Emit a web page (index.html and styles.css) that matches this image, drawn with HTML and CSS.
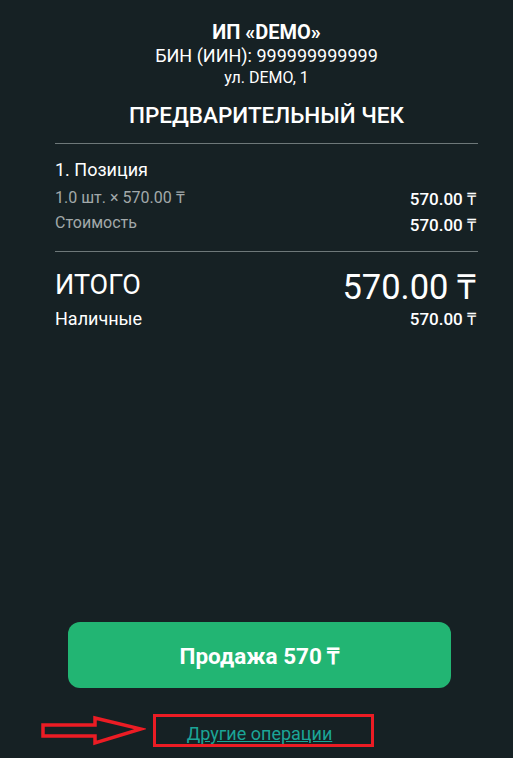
FILE: index.html
```html
<!DOCTYPE html>
<html lang="ru">

<head>
  <meta charset="UTF-8">
  <meta name="viewport" content="width=device-width, initial-scale=1.0">
  <title>Предварительный чек</title>
  <link rel="stylesheet" href="styles.css">
</head>

<body>
  <div class="page">
    <div class="receipt">
      <div class="company">ИП «DEMO»</div>
      <div class="bin">БИН (ИИН): 999999999999</div>
      <div class="address">ул. DEMO, 1</div>
      <h1 class="title">ПРЕДВАРИТЕЛЬНЫЙ ЧЕК</h1>

      <hr class="divider first">

      <div class="item">
        <div class="item-name">1. Позиция</div>
        <div class="row">
          <span class="muted">1.0 шт. × 570.00 ₸</span>
          <span class="amount">570.00 ₸</span>
        </div>
        <div class="row">
          <span class="muted">Стоимость</span>
          <span class="amount">570.00 ₸</span>
        </div>
      </div>

      <hr class="divider">

      <div class="total">
        <span>ИТОГО</span>
        <span class="total-sum">570.00 ₸</span>
      </div>
      <div class="row payment">
        <span>Наличные</span>
        <span class="amount">570.00 ₸</span>
      </div>
    </div>

    <div class="actions">
      <button class="btn-sale">Продажа 570 ₸</button>
      <div class="other">
        <svg class="arrow" width="106" height="32" viewBox="0 0 106 32">
          <polygon points="3,10 55,10 55,3 101,14 55,28 55,21 3,21" fill="none" stroke="#ec1c24" stroke-width="3.5" stroke-linejoin="miter"/>
        </svg>
        <div class="highlight">
          <a href="#" class="other-link">Другие операции</a>
        </div>
      </div>
    </div>
  </div>
</body>

</html>
```

FILE: styles.css
```css
/* Общие стили */
* {
  margin: 0;
  padding: 0;
  box-sizing: border-box;
}

body {
  font-family: Roboto, "Liberation Sans", sans-serif;
  background-color: #162124;
  color: #fff;
}

.page {
  height: 758px;
  display: flex;
  flex-direction: column;
}

.receipt {
  margin-left: 55px;
  width: 423px;
  padding-top: 20px;
  text-align: center;
}

.company {
  font-size: 20px;
  font-weight: bold;
  line-height: 24px;
}

.bin {
  font-size: 18px;
  line-height: 24px;
}

.address {
  font-size: 16px;
  line-height: 20px;
}

.title {
  margin-top: 13px;
  font-size: 22.5px;
  font-weight: 500;
  line-height: 28px;
}

.divider {
  border: none;
  border-top: 1px solid #6e7879;
}

.divider.first {
  margin-top: 14px;
}

.item {
  text-align: left;
  padding-top: 15px;
  padding-bottom: 14px;
}

.item-name {
  font-size: 18px;
  line-height: 22px;
  margin-bottom: 4px;
}

.row {
  display: flex;
  justify-content: space-between;
  align-items: center;
  height: 26px;
}

.muted {
  color: #a2a9aa;
  font-size: 16px;
  margin-top: -3px;
}

.amount {
  font-size: 17px;
  font-weight: 500;
  margin-right: 2px;
}

.total {
  display: flex;
  justify-content: space-between;
  align-items: center;
  margin-top: 15px;
  height: 36px;
  font-size: 27px;
}

.total-sum {
  font-size: 34.5px;
  margin-right: 2px;
}

.payment {
  margin-top: 2px;
  font-size: 18px;
}

.actions {
  margin-top: auto;
  padding-bottom: 11px;
}

.btn-sale {
  display: block;
  margin-left: 68px;
  width: 383px;
  height: 66px;
  border: none;
  border-radius: 12px;
  background-color: #22b573;
  color: #fff;
  font-family: inherit;
  font-size: 22.5px;
  font-weight: bold;
  cursor: pointer;
}

.other {
  position: relative;
  margin-top: 26px;
  height: 33px;
}

.arrow {
  position: absolute;
  left: 40px;
  top: 1px;
}

.highlight {
  position: absolute;
  left: 153px;
  top: 0;
  width: 221px;
  height: 33px;
  border: 3px solid #ec1c24;
  text-align: center;
  padding: 6px 8px 0 0;
}

.other-link {
  color: #1ba597;
  font-size: 18px;
}
```
